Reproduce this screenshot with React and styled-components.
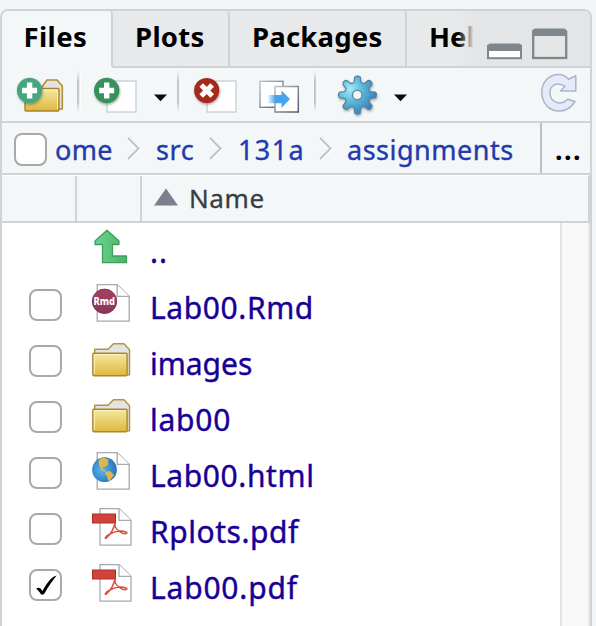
import React from "react";
import styled, { createGlobalStyle } from "styled-components";

const Global = createGlobalStyle`
  * { box-sizing: border-box; }
  html, body { margin: 0; padding: 0; background: #f4f5f8; }
  body { height: 626px; overflow: hidden; font-family: "Noto Sans", "Open Sans", sans-serif; }
`;

const Page = styled.div`
  width: 596px; height: 626px; padding-top: 9px; overflow: hidden;
`;
const Pane = styled.section`
  width: 592px; height: 640px; border: 2px solid #d0d3d6; border-radius: 8px 8px 0 0;
  background: #f3f7f8; overflow: hidden; display: flex; flex-direction: column;
`;
const TabBar = styled.nav`
  display: flex; height: 57px; flex: none; background: #e4e5e7;
`;
const Tab = styled.div`
  width: ${p => p.$w}px; height: 57px; padding: 0 0 5px ${p => p.$pad}px;
  display: flex; align-items: center; flex: none; overflow: hidden;
  font-size: 27.5px; font-weight: 700; color: #000; white-space: nowrap;
  letter-spacing: ${p => p.$track || 0}px;
  background: ${p => (p.$active ? "#f3f7f8" : "#e8e9eb")};
  border-right: ${p => (p.$last ? 0 : 2)}px solid #d0d3d6;
  border-bottom: 2px solid ${p => (p.$active ? "#f3f7f8" : "#d0d3d6")};
  border-radius: ${p => (p.$last ? "4px 0 0 0" : "4px 4px 0 0")};
`;
const WindowButtons = styled.div`
  flex: 1; height: 57px; border-bottom: 2px solid #d0d3d6; margin-left: -16px;
  background: linear-gradient(90deg, #e8e9eb00, #e4e5e7 16px);
  position: relative; display: flex;
`;
const Toolbar = styled.div`
  display: flex; height: 55px; flex: none; border-bottom: 2px solid #d0d3d6;
`;
const Glyph = styled.svg`
  display: block; flex: none; margin-left: ${p => p.$gap || 0}px;
`;
const Separator = styled.i`
  width: 4px; height: 41px; margin: 3px 0 0 ${p => p.$gap}px; flex: none;
  background: linear-gradient(90deg, #bfc3c7 0 1px, #d3d7d9 2px, #fff 3px);
  mask-image: linear-gradient(transparent, #000 25%, #000 75%, transparent);
`;
const Breadcrumb = styled.div`
  height: 52px; flex: none; display: flex; align-items: center;
  border-bottom: 2px solid #d0d3d6; padding-left: 12px;
`;
const Check = styled.span`
  display: flex; flex: none; width: 33px; height: ${p => p.$h || 32}px; margin-top: ${p => p.$top || 0}px;
  border: 2px solid #a9a9a9; border-radius: 8px; background: #fff;
`;
const Crumb = styled.a`
  width: ${p => p.$w}px; margin-left: ${p => p.$gap}px; flex: none; white-space: nowrap;
  font-size: 27px; line-height: 50px; letter-spacing: ${p => p.$track}px; color: #2339ae;
  padding-top: 3px; -webkit-text-stroke: .35px #2339ae;
`;
const More = styled.button`
  height: 50px; width: 50px; margin-left: auto; padding: 2px 0 0 13px; border: 0;
  border-left: 2px solid #bcc0c6; background: none; text-align: left;
  font: 700 27px "Noto Sans", sans-serif; letter-spacing: 1.45px; color: #000;
`;
const Header = styled.div`
  display: flex; height: 48px; flex: none; border-top: 1px solid #fff;
  border-right: 2px solid #d0d3d6; border-bottom: 2px solid #d0d3d6;
`;
const HeadCell = styled.div`
  width: ${p => p.$w}px; border-right: 2px solid #d0d3d6; flex: none;
`;
const HeadName = styled.div`
  display: flex; align-items: center; flex: 1; font-size: 26px; color: #373d42;
  letter-spacing: .6px; padding-bottom: 2px; -webkit-text-stroke: .3px #373d42;
`;
const Body = styled.div`
  display: flex; flex: 1; background: #fff; border-right: 2px solid #e7e8e9;
`;
const Files = styled.div` flex: 1; `;
const Track = styled.div`
  width: 28px; border-left: 2px solid #e3e3e4; background: #f9f9f9;
`;
const Row = styled.div`
  height: ${p => p.$h || 56}px; display: grid; grid-template-columns: 27px 33px 28px 42px 1fr;
  align-items: center;
`;
const FileName = styled.a`
  grid-column: 5; padding: ${p => p.$top || 5}px 0 0 18px; font-size: 30px; line-height: 42px;
  letter-spacing: ${p => p.$track}px; color: #180096; white-space: nowrap;
  -webkit-text-stroke: .4px #180096;
`;
const IconCell = styled.span` grid-column: 4; display: flex; padding-bottom: 2px; `;

const Defs = () => (
  <defs>
    <linearGradient id="gold" x1="0" y1="0" x2="0" y2="1"><stop stopColor="#f2eaa0" /><stop offset="1" stopColor="#e0b640" /></linearGradient>
    <radialGradient id="blue" cx=".3" cy=".35" r=".7"><stop stopColor="#a0ecf8" /><stop offset=".55" stopColor="#54b0d5" /><stop offset="1" stopColor="#3a82b8" /></radialGradient>
    <linearGradient id="leaf"><stop stopColor="#68d58c" /><stop offset="1" stopColor="#4db169" /></linearGradient>
    <linearGradient id="plum" x1="0" y1="0" x2="0" y2="1"><stop stopColor="#a84068" /><stop offset="1" stopColor="#873755" /></linearGradient>
    <radialGradient id="sea" cx=".4" cy=".5" r=".6"><stop stopColor="#58b8ee" /><stop offset="1" stopColor="#2873b8" /></radialGradient>
    <linearGradient id="arrow"><stop stopColor="#4aa3ea" stopOpacity=".1" /><stop offset=".35" stopColor="#4aa3ea" /></linearGradient>
    <linearGradient id="paper" x1="0" y1="0" x2="1" y2="1"><stop stopColor="#bcc1cb" /><stop offset="1" stopColor="#54586c" /></linearGradient>
    <filter id="shade" x="-30%" y="-30%" width="160%" height="170%"><feDropShadow dx="0.6" dy="1.5" stdDeviation="1" floodOpacity=".32" /></filter>
  </defs>
);

/* Toolbar glyphs share the toolbar's own vertical coordinates, 68 to 121. */
const ToolGlyph = ({ x, w, gap, children }) => (
  <Glyph width={w} height="53" viewBox={`${x} 68 ${w} 53`} $gap={gap}>{children}</Glyph>
);
const Plus = ({ x, y, fill }) => (
  <g><circle cx={x} cy={y} r="12.7" fill={fill} filter="url(#shade)" />
    <path d={`M${x - 7.5} ${y}h15M${x} ${y - 8}v16`} stroke="#fff" strokeWidth="5.4" /></g>
);
const AddFolder = () => (
  <ToolGlyph x={14} w={54} gap={12}>
    <Defs />
    <path d="M34 89 42 87 47 80H57L62.3 86V109H57Z" fill="#e2e3e3" stroke="#b68e30" strokeWidth="1.6" strokeLinejoin="round" />
    <rect x="25" y="88.5" width="34" height="22.5" rx="1" fill="url(#gold)" stroke="#a9822d" strokeWidth="1.4" />
    <path d="M26.5 90H57.5V109" fill="none" stroke="#f7efbd" strokeWidth="1" />
    <Plus x={29.6} y={90.5} fill="#45a680" />
  </ToolGlyph>
);
const NewFile = () => (
  <ToolGlyph x={92} w={50} gap={11}>
    <rect x="107" y="81" width="29" height="31" fill="#fff" stroke="#cdd4dc" strokeWidth="1.5" />
    <Plus x={106.7} y={90.5} fill="#37905a" />
  </ToolGlyph>
);
const Caret = ({ x, gap }) => (
  <ToolGlyph x={x} w={16} gap={gap}><path d={`M${x + 1} 94.5H${x + 14}L${x + 7.5} 101.2Z`} fill="#080a0b" /></ToolGlyph>
);
const DeleteFile = () => (
  <ToolGlyph x={192} w={50} gap={11}>
    <rect x="207" y="81" width="29" height="31" fill="#fff" stroke="#cdd4dc" strokeWidth="1.5" />
    <circle cx="206.7" cy="90.5" r="12.6" fill="#a52b1b" filter="url(#shade)" />
    <path d="m201.2 85 11 11m0-11-11 11" stroke="#fff" strokeWidth="5.2" />
  </ToolGlyph>
);
const Copy = () => (
  <ToolGlyph x={257} w={46} gap={15}>
    <rect x="260" y="81.3" width="23" height="26" fill="#fff" stroke="url(#paper)" strokeWidth="1.4" />
    <rect x="275" y="86.5" width="23.3" height="25.5" fill="#fff" stroke="url(#paper)" strokeWidth="1.5" />
    <path d="M268 95H281.5V90.5L290 99 281.5 108V103.3H268Z" fill="url(#arrow)" />
  </ToolGlyph>
);
const toothAngles = [0, 45, 90, 135, 180, 225, 270, 315];
const polar = (r, deg) => {
  const a = (deg - 90) * Math.PI / 180;
  return `${(357.5 + r * Math.cos(a)).toFixed(2)} ${(95 + r * Math.sin(a)).toFixed(2)}`;
};
const gearPath = "M" + toothAngles.map(a =>
  `${polar(13.6, a - 14)}L${polar(18, a - 9)}Q${polar(20.4, a)} ${polar(18, a + 9)}L${polar(13.6, a + 14)}Q${polar(12, a + 22.5)} ${polar(13.6, a + 31)}`
).join("L") + "Z";
const Gear = () => (
  <ToolGlyph x={336} w={44} gap={18}>
    <g filter="url(#shade)">
      <path d={gearPath} fill="url(#blue)" stroke="#59819c" strokeWidth="1.2" strokeLinejoin="round" />
      <circle cx="357.2" cy="95" r="4.7" fill="#f3f7f8" stroke="#69899c" strokeWidth="1.4" />
    </g>
  </ToolGlyph>
);
const Refresh = () => (
  <ToolGlyph x={538} w={44} gap={129}>
    <path d="M568.5 79.2 575.8 75.8V91H560.5L565 86.3C556.5 80.5 549 86.5 550 94C551 103 561 106 567.5 99.2L575 101.5C571 108 565.5 111 559.5 111C549 111 541.8 103 541.8 92.5C541.8 82 549 74.5 559 74.5C562.8 74.5 566 76.5 568.5 79.2Z" fill="#e5ebfa" stroke="#adb4c4" strokeWidth="1.5" strokeLinejoin="round" />
  </ToolGlyph>
);

/* File-list glyphs are drawn in a 42 by 42 box. */
const ListGlyph = ({ children }) => <Glyph width="42" height="42" viewBox="0 0 42 42">{children}</Glyph>;
const Folder = () => (
  <ListGlyph>
    <g transform="translate(0 .7)">
      <path d="M4.7 15V9.5H18L23.5 4H34L39.5 10V35H35" fill="#e2e3e3" stroke="#b8933d" strokeWidth="1.5" strokeLinejoin="round" />
      <rect x="2.8" y="13.5" width="34.3" height="22.5" rx="1" fill="url(#gold)" stroke="#ad862e" strokeWidth="1.4" />
      <path d="M4.3 34V15H35.6" fill="none" stroke="#f8f0c0" />
    </g>
  </ListGlyph>
);
const Sheet = ({ x = 7.2, w = 32 }) => (
  <g fill="#fff" stroke="#a6a9ae" strokeWidth="1.3">
    <path d={`M${x} 1.7H${x + w - 12}L${x + w} 13.3V38.2H${x}Z`} />
    <path d={`M${x + w - 12} 1.7V13.3H${x + w}`} />
  </g>
);
const Rmd = () => (
  <ListGlyph>
    <Sheet /><circle cx="14.5" cy="18.3" r="12.2" fill="url(#plum)" stroke="#7d3550" />
    <text x="3.4" y="21.5" fontFamily="Noto Sans, sans-serif" fontSize="10" fontWeight="800" fill="#fff" textLength="21.5" lengthAdjust="spacingAndGlyphs">Rmd</text>
  </ListGlyph>
);
const Html = () => (
  <ListGlyph>
    <Sheet /><circle cx="14.5" cy="18.7" r="12.4" fill="url(#sea)" />
    <path d="M9.5 7.8 14 6.8 19 8.7 17.5 11 18.8 13.2 15 15.7 11.7 17 15.5 19.5 15.2 21.5 10.7 18.2 8.5 11.5ZM15.8 20.8 20 20 24 24 19.5 30.2 17.8 29 17.3 25.5 15 23Z" fill="#dfb64c" />
  </ListGlyph>
);
const Pdf = () => (
  <ListGlyph>
    <Sheet x={10} w={31} />
    <rect x="2.5" y="7" width="23" height="9" fill="#d14238" stroke="#ad2e29" />
    <path d="M25.5 16C23 19 24.5 24 17 30.2C14.5 33 14.2 30.3 19 27.5C26 23.5 32 23.4 36 25C39 26.3 34 28.2 29.5 24.5C25.5 21.5 24 18 25.5 15.5" fill="none" stroke="#db4b40" strokeWidth="1.5" />
  </ListGlyph>
);
const Up = () => (
  <ListGlyph>
    <path d="M17 2.3 29 13V16.5H22.5V28H36.5V34.7H12.5V16.5H5V13Z" fill="url(#leaf)" stroke="#419e5b" strokeWidth="1.3" strokeLinejoin="round" />
  </ListGlyph>
);
const Chevron = () => (
  <Glyph width="14" height="26" viewBox="0 0 14 26"><path d="m1 4 11 10.5L1 25" fill="none" stroke="#fff" strokeWidth="3" /><path d="m1 3 10.5 10.5L1 24" fill="none" stroke="#bfc2ca" strokeWidth="2" /></Glyph>
);
const Tick = () => (
  <svg width="29" height="28" viewBox="0 0 29 28"><path d="M5.2 17.5C8 15.8 9.5 17 11.5 20C16 12 20 6 25.8 4.6C21 10.3 18 15 13.3 22.8Q10 25 8.8 21.5Z" fill="#000" /></svg>
);

const files = [
  ["Lab00.Rmd", Rmd, 0.6], ["images", Folder, 0], ["lab00", Folder, 0.75],
  ["Lab00.html", Html, 0.6], ["Rplots.pdf", Pdf, 0.55], ["Lab00.pdf", Pdf, 0.8, true],
];

export default function App() {
  return (
    <Page>
      <Global />
      <Pane>
        <TabBar>
          <Tab $active $w={111} $pad={21.5} $track={0.4}>Files</Tab>
          <Tab $w={117} $pad={22} $track={0.3}>Plots</Tab>
          <Tab $w={177} $pad={22} $track={0.2}>Packages</Tab>
          <Tab $last $w={67} $pad={22}>Hel</Tab>
          <WindowButtons>
            <Glyph width="124" height="55" viewBox="458 11 124 55">
              <rect x="488" y="46" width="33" height="12.2" fill="#fff" stroke="#7e878c" strokeWidth="2" />
              <path d="M487 51V47Q487 43.5 491 43.5H518Q522 43.5 522 47V51Z" fill="#7e878c" />
              <rect x="533.2" y="32" width="33" height="26" fill="#e6e6e6" stroke="#7e878c" strokeWidth="2.3" />
              <path d="M532 36V32Q532 28.5 536 28.5H563Q567 28.5 567 32V36Z" fill="#7e878c" />
            </Glyph>
          </WindowButtons>
        </TabBar>
        <Toolbar>
          <AddFolder />
          <Separator $gap={9} />
          <NewFile /><Caret x={153} gap={11} />
          <Separator $gap={8} />
          <DeleteFile /><Copy />
          <Separator $gap={11} />
          <Gear /><Caret x={393} gap={13} />
          <Refresh />
        </Toolbar>
        <Breadcrumb>
          <Check $h={33} $top={2} />
          <Crumb $gap={8} $w={72} $track={0.3}>ome</Crumb><Chevron />
          <Crumb $gap={15} $w={53} $track={0.6}>src</Crumb><Chevron />
          <Crumb $gap={15} $w={81} $track={1.4}>131a</Crumb><Chevron />
          <Crumb $gap={14} $w={170} $track={0.5}>assignments</Crumb>
          <More>...</More>
        </Breadcrumb>
        <Header>
          <HeadCell $w={75} /><HeadCell $w={65} />
          <HeadName>
            <Glyph $gap={12} width="35" height="24" viewBox="0 0 35 24"><path d="M0 19.5H24L12 2.5Z" fill="#7b7f8e" /></Glyph>
            Name
          </HeadName>
        </Header>
        <Body>
          <Files>
            <Row $h={54}><IconCell><Up /></IconCell><FileName $top={3} $track={1}>..</FileName></Row>
            {files.map(([name, Icon, track, checked]) => (
              <Row key={name}>
                <span /><Check>{checked && <Tick />}</Check><span />
                <IconCell><Icon /></IconCell><FileName $track={track}>{name}</FileName>
              </Row>
            ))}
          </Files>
          <Track />
        </Body>
      </Pane>
    </Page>
  );
}
